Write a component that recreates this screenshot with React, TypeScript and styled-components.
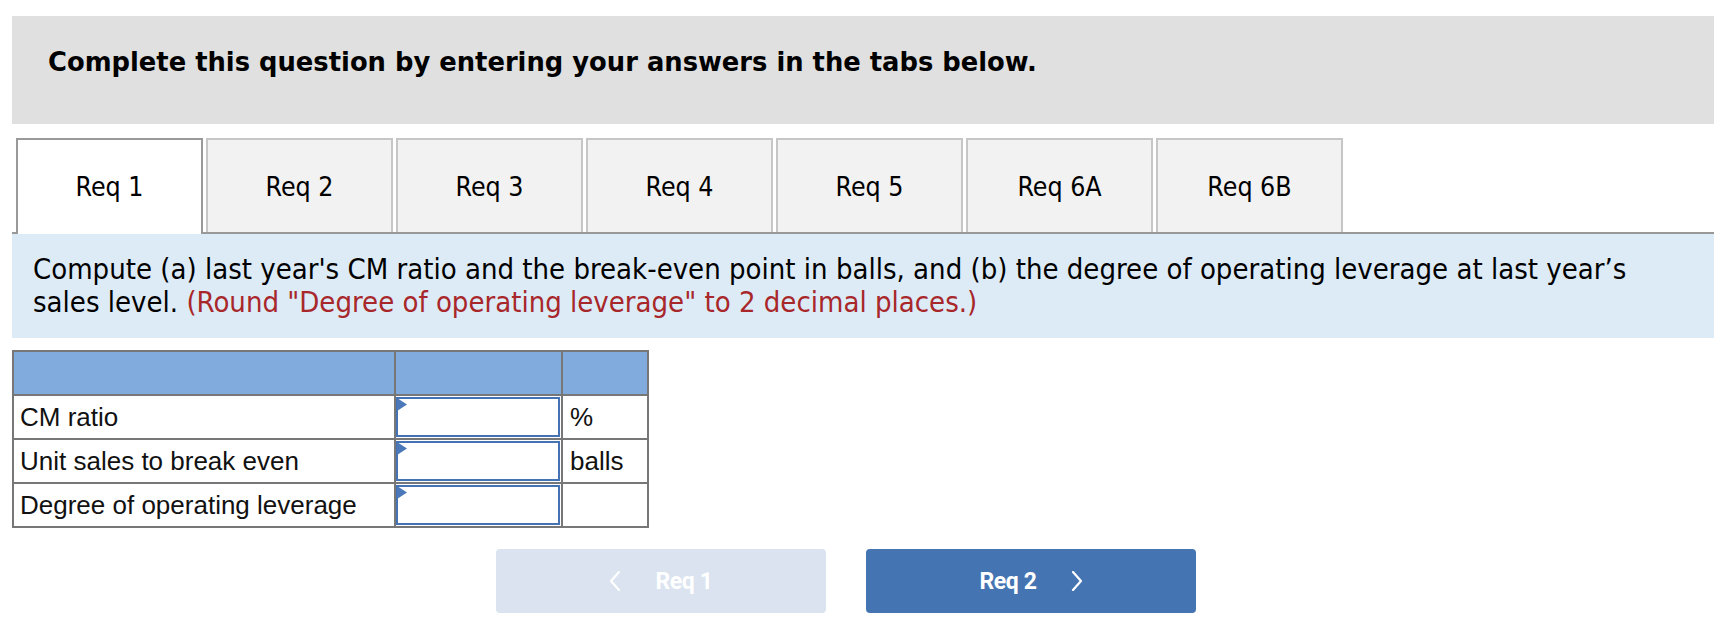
import React from 'react';
import styled, { createGlobalStyle } from 'styled-components';

const GlobalStyle = createGlobalStyle`
  body {
    margin: 0;
    background: #ffffff;
  }
`;

const Page = styled.div`
  padding: 16px 12px 0 12px;
  width: 1726px;
  box-sizing: border-box;
`;

const Banner = styled.div`
  height: 108px;
  box-sizing: border-box;
  background-color: #e0e0e0;
  padding: 32px 0 0 36px;
`;

const BannerText = styled.h2`
  margin: 0;
  font-family: 'DejaVu Sans', Verdana, sans-serif;
  font-weight: bold;
  font-size: 25.8px;
  line-height: 28px;
  color: #000;
`;

const TabList = styled.div`
  margin-top: 14px;
  padding-left: 4px;
  display: flex;
  align-items: flex-end;
  gap: 3px;
  border-bottom: 2px solid #999;
`;

const Tab = styled.div<{ $active?: boolean }>`
  width: 187px;
  height: ${(p) => (p.$active ? '96px' : '94px')};
  margin-bottom: ${(p) => (p.$active ? '-2px' : '0')};
  box-sizing: border-box;
  border: 2px solid ${(p) => (p.$active ? '#999' : '#c6c6c6')};
  border-bottom: none;
  background-color: ${(p) => (p.$active ? '#fff' : '#f2f2f2')};
  display: flex;
  align-items: center;
  justify-content: center;
  padding-bottom: ${(p) => (p.$active ? '2px' : '0')};
  font-family: 'DejaVu Sans Condensed', 'DejaVu Sans', Tahoma, sans-serif;
  font-size: 26.5px;
  color: #000;
  cursor: pointer;
`;

const Instructions = styled.div`
  background-color: #ddebf7;
  padding: 19px 21px 19px 21px;
  font-family: 'DejaVu Sans Condensed', 'DejaVu Sans', Tahoma, sans-serif;
  font-size: 29px;
  line-height: 33px;
  color: #000;
`;

const Note = styled.span`
  color: #a8272a;
`;

const Table = styled.table`
  margin-top: 12px;
  border-collapse: collapse;
  font-family: 'Liberation Sans', Arial, sans-serif;
  font-size: 26px;
  line-height: 30px;
  color: #111;
`;

const HeadCell = styled.th<{ $w: number }>`
  width: ${(p) => p.$w}px;
  height: 42px;
  padding: 0;
  background-color: #82abdd;
  border: 2px solid #777;
`;

const LabelCell = styled.td`
  height: 42px;
  padding: 0 0 0 6px;
  border: 2px solid #777;
  white-space: nowrap;
`;

const InputCell = styled.td`
  padding: 1px 1px 1px 0;
  border: 2px solid #777;
`;

const InputWrap = styled.div`
  position: relative;
  height: 40px;
`;

const AnswerInput = styled.input`
  display: block;
  width: 100%;
  height: 100%;
  box-sizing: border-box;
  border: 2.5px solid #4472b2;
  outline: none;
  background: #fff;
  margin: 0;
  font-size: 20px;
`;

const Flag = styled.svg`
  position: absolute;
  left: 1px;
  top: 1px;
`;

const UnitCell = styled.td`
  padding: 0 0 0 7px;
  border: 2px solid #777;
`;

const NavRow = styled.div`
  margin-top: 21px;
  padding-left: 484px;
  display: flex;
  gap: 40px;
`;

const NavButton = styled.button<{ $disabled?: boolean }>`
  width: 330px;
  height: 64px;
  border: none;
  border-radius: 4px;
  background-color: ${(p) => (p.$disabled ? '#dae3ef' : '#4574b2')};
  color: #fff;
  display: flex;
  align-items: center;
  justify-content: center;
  gap: 34px;
  font-family: Roboto, 'Liberation Sans', sans-serif;
  font-weight: bold;
  font-size: 23px;
  letter-spacing: -0.4px;
  cursor: ${(p) => (p.$disabled ? 'default' : 'pointer')};
  padding: 0;
`;

const tabs = ['Req 1', 'Req 2', 'Req 3', 'Req 4', 'Req 5', 'Req 6A', 'Req 6B'];

const rows = [
  { label: 'CM ratio', unit: '%' },
  { label: 'Unit sales to break even', unit: 'balls' },
  { label: 'Degree of operating leverage', unit: '' },
];

function Chevron({ dir }: { dir: 'left' | 'right' }) {
  const pts = dir === 'left' ? '10,1 2,10 10,19' : '2,1 10,10 2,19';
  return (
    <svg width="12" height="20" viewBox="0 0 12 20">
      <polyline points={pts} fill="none" stroke="#fff" strokeWidth="2.2" strokeLinecap="round" strokeLinejoin="round" />
    </svg>
  );
}

function App() {
  return (
    <Page>
      <GlobalStyle />
      <Banner>
        <BannerText>Complete this question by entering your answers in the tabs below.</BannerText>
      </Banner>
      <TabList>
        {tabs.map((t, i) => (
          <Tab key={t} $active={i === 0}>
            {t}
          </Tab>
        ))}
      </TabList>
      <Instructions>
        Compute (a) last year's CM ratio and the break-even point in balls, and (b) the degree of operating leverage at last year’s
        <br />
        sales level. <Note>(Round "Degree of operating leverage" to 2 decimal places.)</Note>
      </Instructions>
      <Table>
        <thead>
          <tr>
            <HeadCell $w={380} />
            <HeadCell $w={165} />
            <HeadCell $w={84} />
          </tr>
        </thead>
        <tbody>
          {rows.map((r) => (
            <tr key={r.label}>
              <LabelCell>{r.label}</LabelCell>
              <InputCell>
                <InputWrap>
                  <AnswerInput type="text" />
                  <Flag width="10" height="13" viewBox="0 0 10 13">
                    <polygon points="0,0 10,6.5 0,13" fill="#4a78b8" />
                  </Flag>
                </InputWrap>
              </InputCell>
              <UnitCell>{r.unit}</UnitCell>
            </tr>
          ))}
        </tbody>
      </Table>
      <NavRow>
        <NavButton $disabled>
          <Chevron dir="left" />
          <span>Req 1</span>
        </NavButton>
        <NavButton>
          <span>Req 2</span>
          <Chevron dir="right" />
        </NavButton>
      </NavRow>
    </Page>
  );
}

export default App;
